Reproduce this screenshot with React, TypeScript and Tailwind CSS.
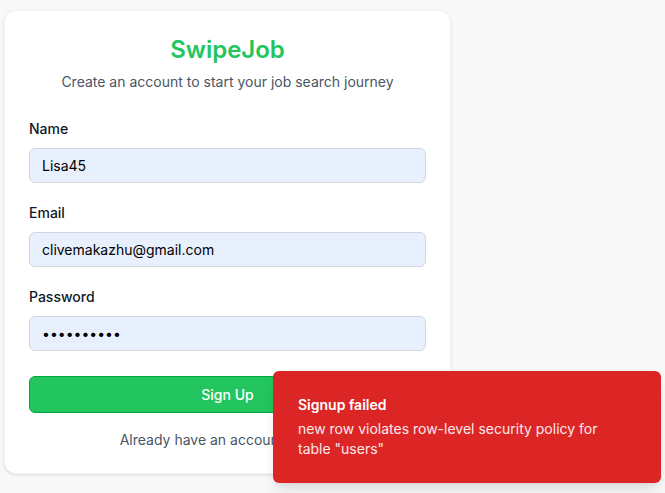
import React from 'react';

const font = { fontFamily: 'Inter, "Noto Sans", sans-serif' };

const Field: React.FC<{ label: string; value: string; type?: string; top: string }> = ({ label, value, type = 'text', top }) => (
  <div className={`flex flex-col ${top}`}>
    <label className="text-sm font-medium leading-5 text-gray-900">{label}</label>
    <input
      type={type}
      defaultValue={value}
      readOnly
      className="mt-[9px] h-[35px] w-full rounded-md border border-gray-300 bg-[#e8f0fe] px-3 text-sm text-black outline-none"
    />
  </div>
);

const App: React.FC = () => {
  return (
    <div className="relative h-[493px] w-[665px] overflow-hidden bg-[#f8f8f8]" style={font}>
      <div className="ml-[4px] mt-[10px] w-[447px] rounded-xl border border-gray-100 bg-white px-6 pb-[23px] pt-[23px] shadow-sm">
        <div className="text-center">
          <h1 className="text-2xl font-semibold leading-8 text-[#22c55e]">SwipeJob</h1>
          <p className="mt-[6px] text-sm leading-5 text-gray-600">Create an account to start your job search journey</p>
        </div>

        <form className="mt-[27px]" onSubmit={e => e.preventDefault()}>
          <Field label="Name" value="Lisa45" top="" />
          <Field label="Email" value="clivemakazhu@gmail.com" top="mt-5" />
          <Field label="Password" value="password12" type="password" top="mt-5" />
          <button
            type="submit"
            className="mt-[25px] h-[37px] w-full rounded-md border border-green-600 bg-[#22c55e] text-sm font-medium text-white"
          >
            Sign Up
          </button>
        </form>

        <p className="mt-[17px] text-center text-sm leading-5 text-gray-600">
          Already have an account? <a href="#" className="text-[#22c55e] font-medium">Log in</a>
        </p>
      </div>

      {/* toast */}
      <div className="absolute bottom-[10px] right-[4px] grid w-[388px] gap-1 rounded-md bg-[#dc2626] py-6 pl-[25px] pr-8 text-white shadow-lg">
        <div className="text-sm font-semibold leading-5">Signup failed</div>
        <div className="text-sm leading-5 opacity-90">new row violates row-level security policy for table "users"</div>
      </div>
    </div>
  );
};

export default App;
